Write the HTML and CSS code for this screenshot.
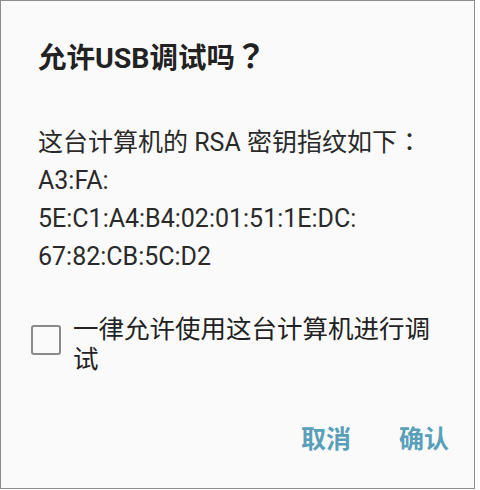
FILE: index.html
```html
<!DOCTYPE html>
<html lang="zh-CN">
  <head>
    <meta charset="UTF-8" />
    <meta name="viewport" content="width=device-width, initial-scale=1.0" />
    <title>允许USB调试吗？</title>

    <link rel="stylesheet" href="styles.css">
  </head>
  <body>
    <div class="dialog">
      <h1 class="title">允许USB调试吗<span class="punct">？</span></h1>

      <div class="message">
        <p>这台计算机的 RSA 密钥指纹如下<span class="punct">：</span></p>
        <p>A3:FA:</p>
        <p>5E:C1:A4:B4:02:01:51:1E:DC:</p>
        <p>67:82:CB:5C:D2</p>
      </div>

      <label class="always">
        <span class="box"></span>
        <span class="always-text">一律允许使用这台计算机进行调试</span>
      </label>

      <div class="buttons">
        <button class="btn">取消</button>
        <button class="btn">确认</button>
      </div>
    </div>
  </body>
</html>
```

FILE: styles.css
```css
* {
  margin: 0;
  padding: 0;
  box-sizing: border-box;
}

body {
  background-color: #ffffff;
  font-family: Roboto, "Noto Sans CJK SC", sans-serif;
  text-spacing-trim: space-all;
}

.dialog {
  width: 475px;
  height: 489px;
  border: 1px solid #8c8c8c;
  background-color: #fafafa;
  padding: 38px 30px 0 37px;
  display: flex;
  flex-direction: column;
}

.title {
  font-size: 28.5px;
  font-weight: bold;
  color: #222222;
  line-height: 34px;
}

/* full-width punctuation, centred in its em box */
.punct {
  display: inline-block;
  width: 1em;
  text-align: center;
  font-family: "Noto Sans CJK JP", sans-serif;
}

.title .punct {
  font-size: 1.1em;
  line-height: 1;
}

.message {
  margin-top: 45px;
  font-size: 25px;
  line-height: 38px;
  color: #2a2a2a;
}

.always {
  display: flex;
  align-items: flex-start;
  gap: 12px;
  margin-top: 38px;
  margin-left: -7px;
}

.box {
  flex-shrink: 0;
  width: 30px;
  height: 30px;
  margin-top: 11px;
  border: 2px solid #8a8a8a;
  border-radius: 3px;
}

.always-text {
  font-size: 25.5px;
  line-height: 30px;
  color: #222222;
}

.buttons {
  display: flex;
  justify-content: flex-end;
  gap: 48px;
  margin-top: 51px;
  margin-right: -5px;
}

.btn {
  border: none;
  background: none;
  font-family: inherit;
  font-size: 25px;
  font-weight: bold;
  color: #5a9fba;
  line-height: 30px;
}
```
